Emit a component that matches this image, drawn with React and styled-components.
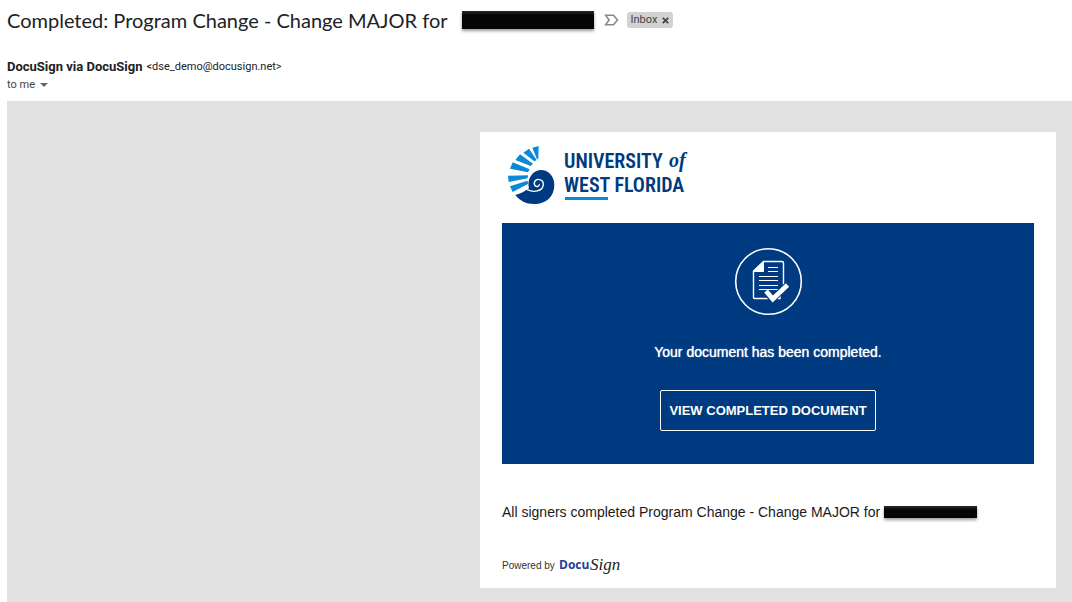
import React from "react";
import styled, { createGlobalStyle } from "styled-components";

const GlobalStyle = createGlobalStyle`
  * {
    box-sizing: border-box;
  }
  html,
  body,
  #root {
    height: 100%;
  }
  body {
    margin: 0;
    background: #fff;
    color: #202124;
    font-family: Roboto, "Liberation Sans", sans-serif;
  }
`;

const Page = styled.div`
  display: flex;
  flex-direction: column;
  min-height: 100%;
  padding-left: 7px;
`;

const Subject = styled.header`
  display: flex;
  align-items: center;
  height: 40px;
`;

const Title = styled.h1`
  margin: 0;
  font-family: Lato, sans-serif;
  font-size: 20px;
  font-weight: 400;
  line-height: 24px;
  white-space: nowrap;
`;

const Redacted = styled.span`
  flex: none;
  width: ${({ $wide }) => ($wide ? "132px" : "93px")};
  height: ${({ $wide }) => ($wide ? "18px" : "12px")};
  margin-left: ${({ $wide }) => ($wide ? "14px" : "4px")};
  background: linear-gradient(#2b2b2b, #050505 4px);
  box-shadow: 0 2px 3px rgba(0, 0, 0, 0.4);
`;

const Marker = styled.button`
  display: flex;
  margin: 0 8px 0 10px;
  padding: 0;
  border: none;
  background: none;
`;

const Chip = styled.div`
  display: flex;
  align-items: center;
  gap: 5px;
  height: 16px;
  padding: 0 4px;
  border-radius: 3px;
  background: #d2d2d2;
  color: #444;
  font-size: 11px;
  line-height: 16px;
`;

const ChipClose = styled.button`
  display: flex;
  padding: 0;
  border: none;
  background: none;
  color: #444;
  cursor: pointer;
`;

const Sender = styled.section`
  display: flex;
  flex-direction: column;
  padding: 18px 0 7px;
`;

const From = styled.div`
  display: flex;
  align-items: center;
  gap: 4px;
  line-height: 18px;
`;

const Name = styled.strong`
  font-size: 13px;
  font-weight: 700;
`;

const Address = styled.span`
  font-size: 11px;
`;

const Recipient = styled.button`
  display: flex;
  align-items: center;
  align-self: flex-start;
  gap: 5px;
  padding: 0;
  border: none;
  background: none;
  color: #444;
  font-family: inherit;
  font-size: 11px;
  line-height: 18px;
  cursor: pointer;
`;

const Message = styled.main`
  display: flex;
  flex: 1;
  justify-content: flex-end;
  align-items: flex-start;
  padding: 31px 16px 14px;
  background: #e2e2e2;
  font-family: "Liberation Sans", Arial, sans-serif;
`;

const Card = styled.article`
  width: 100%;
  max-width: 576px;
  padding: 10px 22px 12px;
  background: #fff;
`;

const LogoRow = styled.div`
  display: flex;
  height: 81px;
`;

const Banner = styled.section`
  display: flex;
  flex-direction: column;
  align-items: center;
  padding: 24px 20px 33px;
  background: #003a80;
  color: #fff;
`;

const BannerText = styled.p`
  margin: 26px 0 28px;
  font-size: 14px;
  line-height: 20px;
  text-shadow: 0 0 1px #fff;
`;

const ViewLink = styled.a`
  padding: 0 8px;
  border: 1px solid #fff;
  border-radius: 2px;
  color: #fff;
  font-size: 13px;
  font-weight: 700;
  line-height: 39px;
  text-decoration: none;
`;

const Summary = styled.p`
  display: flex;
  align-items: center;
  margin: 38px 0 33px;
  color: #1a1a1a;
  font-size: 14px;
  line-height: 20px;
`;

const Powered = styled.footer`
  display: flex;
  align-items: center;
  gap: 4px;
  height: 21px;
  color: #333;
  font-size: 10px;
`;

function UniversityLogo() {
  return (
    <svg width="190" height="66" viewBox="0 0 190 66" role="img" aria-label="University of West Florida">
      <g transform="scale(0.3333)">
        <g fill="#0a8ad6">
          <path d="M91 17L110 12L109 50L105 52Z" />
          <path d="M64 32L81 20L104 54L97 58Z" />
          <path d="M40 54L54 37L93 65L86 72Z" />
          <path d="M24 80L32 61L83 82L78 91Z" />
          <path d="M18 101L20 120L77 109L78 100Z" />
          <path d="M24 133L32 150L79 125L76 116Z" />
        </g>
        <path
          d="M40 159C56 155 69 148 81 139C74 112 91 85 116 84C140 84 157 103 157 129C157 163 132 187 96 186C72 186 53 176 40 159Z"
          fill="#003a80"
        />
        <path
          d="M76 143C94 152 122 149 124 128C125 110 101 107 97 122C95 133 109 138 112 128"
          fill="none"
          stroke="#fff"
          strokeWidth="4"
          strokeLinecap="round"
        />
      </g>
      <g
        fill="#003a80"
        fontFamily="'Liberation Sans Narrow', 'Roboto Condensed', 'Open Sans Condensed', Roboto, sans-serif"
        fontWeight="600"
        fontSize="20"
      >
        <text x="62" y="26">UNIVERSITY</text>
        <text x="62" y="50">WEST FLORIDA</text>
      </g>
      <text x="167" y="25" fill="#003a80" fontFamily="'Liberation Serif', serif" fontStyle="italic" fontWeight="700" fontSize="20">
        of
      </text>
      <rect x="63" y="55" width="43" height="3" fill="#0a8ad6" />
    </svg>
  );
}

function DocumentIcon() {
  return (
    <svg width="69" height="69" viewBox="0 0 69 69" fill="none" stroke="#fff" aria-hidden="true">
      <circle cx="34.5" cy="34.5" r="32.8" strokeWidth="1.6" />
      <path d="M46 48.5V51.5H20.5Q19.5 51.5 19.5 50.5V24L29.5 14.5H48Q49.5 14.5 49.5 16V40" strokeWidth="1.4" />
      <path d="M19.5 24.5L29.5 14.5V24.5Z" fill="#fff" />
      <path d="M34 20.5H44M34 24.5H44M25 29.5H44M25 33.5H44M25 38.5H44M25 42.5H44" strokeWidth="1.2" />
      <path d="M32.5 45L38.5 52L53 38.5" stroke="#003a80" strokeWidth="7" />
      <path d="M32 44L38.8 52L53.5 38" strokeWidth="4.8" />
    </svg>
  );
}

function DocuSignLogo() {
  return (
    <svg width="66" height="21" viewBox="0 0 66 21" role="img" aria-label="DocuSign">
      <text x="0" y="14" fill="#21409a" fontFamily="'Open Sans', sans-serif" fontWeight="700" fontSize="12">
        Docu
      </text>
      <text x="31" y="15" fill="#222" fontFamily="'Liberation Serif', serif" fontStyle="italic" fontSize="17">
        Sign
      </text>
    </svg>
  );
}

function App() {
  return (
    <>
      <GlobalStyle />
      <Page>
        <Subject>
          <Title>Completed: Program Change - Change MAJOR for</Title>
          <Redacted $wide />
          <Marker aria-label="Mark as important">
            <svg width="15" height="12" viewBox="0 0 15 12" fill="none" stroke="#8a8a8a" strokeWidth="1.6">
              <path d="M1.5 1.2H9.5L13.5 6L9.5 10.8H1.5L5.2 6Z" />
            </svg>
          </Marker>
          <Chip>
            Inbox
            <ChipClose aria-label="Remove label">
              <svg width="7" height="7" viewBox="0 0 7 7" stroke="currentColor" strokeWidth="1.7">
                <path d="M0.8 0.8L6.2 6.2M6.2 0.8L0.8 6.2" />
              </svg>
            </ChipClose>
          </Chip>
        </Subject>
        <Sender>
          <From>
            <Name>DocuSign via DocuSign</Name>
            <Address>&lt;dse_demo@docusign.net&gt;</Address>
          </From>
          <Recipient>
            to me
            <svg width="8" height="4" viewBox="0 0 8 4" fill="#666" aria-hidden="true">
              <path d="M0 0H8L4 4Z" />
            </svg>
          </Recipient>
        </Sender>
        <Message>
          <Card>
            <LogoRow>
              <UniversityLogo />
            </LogoRow>
            <Banner>
              <DocumentIcon />
              <BannerText>Your document has been completed.</BannerText>
              <ViewLink href="#document">VIEW COMPLETED DOCUMENT</ViewLink>
            </Banner>
            <Summary>
              All signers completed Program Change - Change MAJOR for
              <Redacted />
            </Summary>
            <Powered>
              Powered by
              <DocuSignLogo />
            </Powered>
          </Card>
        </Message>
      </Page>
    </>
  );
}

export default App;
